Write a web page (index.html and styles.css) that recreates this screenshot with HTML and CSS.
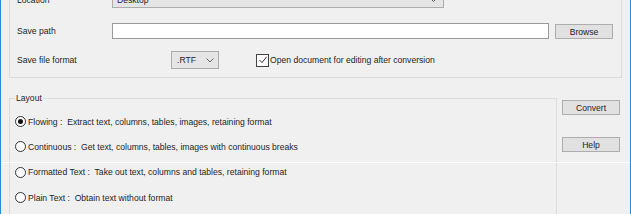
FILE: index.html
```html
<!DOCTYPE html>
<html lang="en">
<head>
  <meta charset="UTF-8">
  <title>Convert</title>
  <link rel="stylesheet" href="styles.css">
</head>
<body>

  <div class="window">
    <!-- output options -->
    <div class="group">
      <div class="row row-location">
        <span class="caption">Location</span>
        <div class="combo combo-location">
          <span>Desktop</span>
          <svg class="chev" width="7" height="4" viewBox="0 0 7 4"><path d="M0.5 0.5 L3.5 3.5 L6.5 0.5" fill="none" stroke="#555" stroke-width="1"/></svg>
        </div>
      </div>
      <div class="row row-path">
        <span class="caption">Save path</span>
        <div class="textbox"></div>
        <div class="btn btn-browse">Browse</div>
      </div>
      <div class="row row-format">
        <span class="caption">Save file format</span>
        <div class="combo combo-format">
          <span>.RTF</span>
          <svg class="chev" width="8" height="5" viewBox="0 0 8 5"><path d="M0.5 0.5 L4 4 L7.5 0.5" fill="none" stroke="#666" stroke-width="1"/></svg>
        </div>
        <span class="check">
          <svg width="10" height="10" viewBox="0 0 10 10"><path d="M1.5 5 L4 7.6 L8.6 1.8" fill="none" stroke="#333" stroke-width="1"/></svg>
        </span>
        <span class="check-text">Open document for editing after conversion</span>
      </div>
    </div>

    <!-- layout -->
    <div class="bottom">
      <fieldset class="layout">
        <legend>Layout</legend>
        <div class="opt"><span class="radio on"></span><span class="opt-text">Flowing :  Extract text, columns, tables, images, retaining format</span></div>
        <div class="opt"><span class="radio"></span><span class="opt-text">Continuous :  Get text, columns, tables, images with continuous breaks</span></div>
        <div class="opt"><span class="radio"></span><span class="opt-text">Formatted Text :  Take out text, columns and tables, retaining format</span></div>
        <div class="opt"><span class="radio"></span><span class="opt-text">Plain Text :  Obtain text without format</span></div>
      </fieldset>
      <div class="actions">
        <div class="btn btn-convert">Convert</div>
        <div class="btn btn-help">Help</div>
      </div>
    </div>

    <div class="seam"></div>
  </div>

</body>
</html>
```

FILE: styles.css
```css
body {
  margin: 0;
  padding: 0;
  font-family: 'Liberation Sans', Arial, sans-serif;
  font-size: 8.6px;
  color: #1e1e1e;
  background-color: #f0f0f0;
}
.window {
  position: relative;
  width: 631px;
  height: 214px;
  box-sizing: border-box;
  overflow: hidden;
  background-color: #f0f0f0;
  border-left: 1px solid #2a8ad8;
  border-right: 1px solid #2a8ad8;
}
.group {
  margin: -16px 8px 0 8px;
  padding: 0 0 4px 7px;
  border: 1px solid #dcdcdc;
}
.row {
  display: flex;
  align-items: center;
}
.row-location {
  height: 30px;
}
.row-path {
  height: 32px;
}
.row-format {
  height: 26px;
}
.caption {
  width: 95px;
  flex: none;
}
.combo {
  display: flex;
  align-items: center;
  justify-content: space-between;
  box-sizing: border-box;
  background-color: #e5e5e5;
  border: 1px solid #acacac;
}
.combo-location {
  width: 332px;
  height: 16px;
  padding: 0 6px 0 4px;
}
.combo-format {
  width: 48px;
  height: 18px;
  margin-left: 59px;
  padding: 0 4px 0 5px;
}
.textbox {
  width: 437px;
  height: 16px;
  box-sizing: border-box;
  background-color: #fff;
  border: 1px solid #9a9a9a;
}
.btn {
  display: flex;
  align-items: center;
  justify-content: center;
  width: 58px;
  height: 15px;
  box-sizing: border-box;
  background-color: #e1e1e1;
  border: 1px solid #adadad;
}
.btn-browse {
  margin-left: 6px;
  margin-top: 1px;
}
.check {
  display: flex;
  align-items: center;
  justify-content: center;
  width: 13px;
  height: 13px;
  box-sizing: border-box;
  margin-left: 37px;
  margin-right: 1px;
  background-color: #fff;
  border: 1px solid #444;
}
.bottom {
  display: flex;
  margin-top: 14px;
}
.layout {
  width: 548px;
  height: 160px;
  box-sizing: border-box;
  margin: 0 0 0 8px;
  padding: 5px 0 0 5px;
  border: 1px solid #dcdcdc;
}
.layout legend {
  padding: 0 1px;
  line-height: 12px;
}
.opt {
  display: flex;
  align-items: center;
  height: 25.3px;
}
.radio {
  position: relative;
  width: 11px;
  height: 11px;
  box-sizing: border-box;
  margin-right: 2px;
  border: 1px solid #333;
  border-radius: 50%;
  background-color: #fff;
}
.radio.on::after {
  content: '';
  position: absolute;
  left: 2px;
  top: 2px;
  width: 5px;
  height: 5px;
  border-radius: 50%;
  background-color: #111;
}
.opt-text {
  white-space: pre;
}
.actions {
  margin-left: 5px;
  padding-top: 8px;
}
.btn-help {
  margin-top: 22px;
}
.seam {
  position: absolute;
  left: 0;
  right: 0;
  top: 162px;
  height: 1px;
  background-color: #fff;
}
```
